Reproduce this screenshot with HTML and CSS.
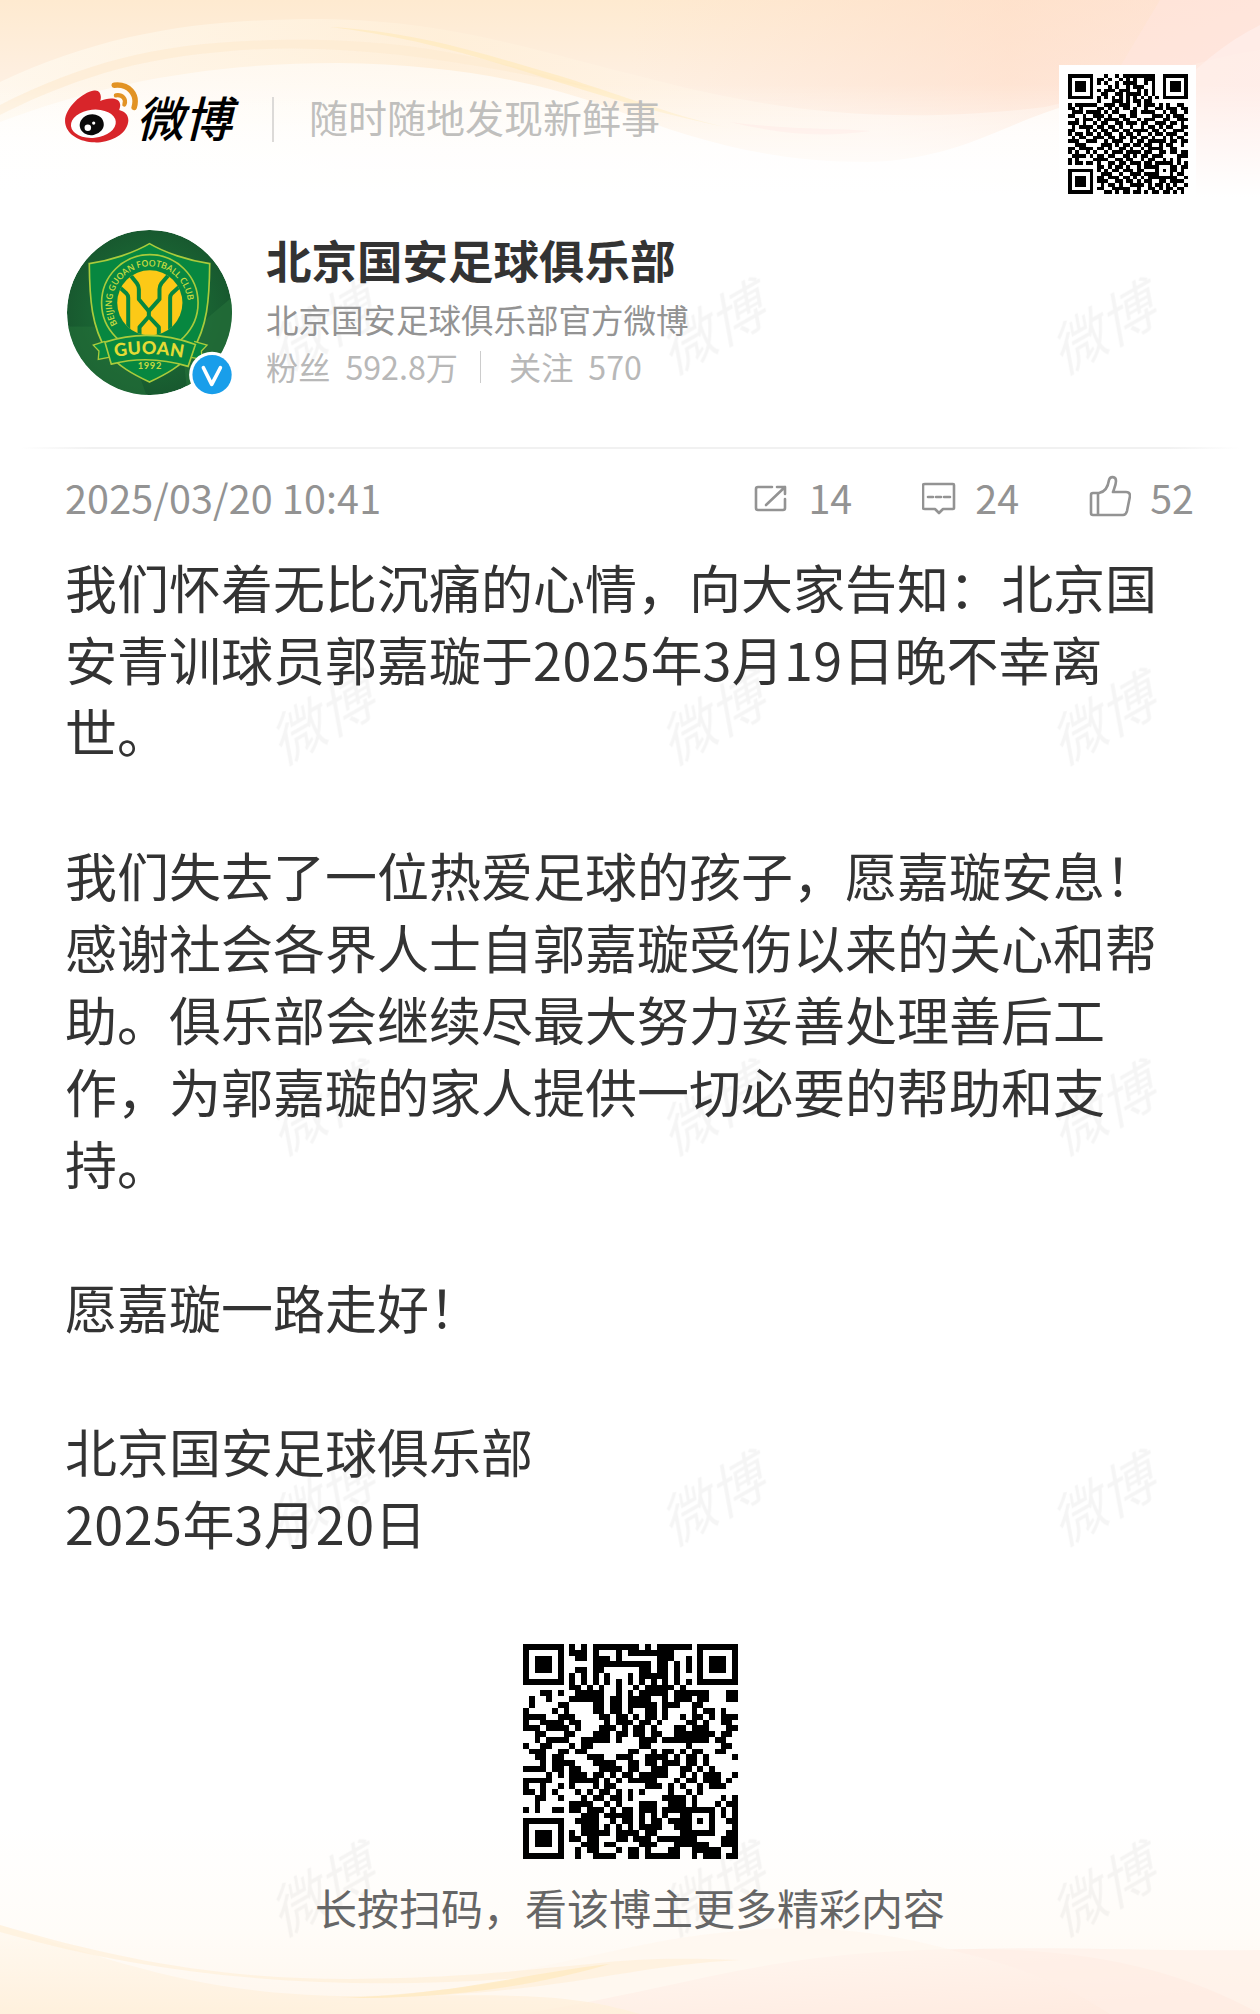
FILE: index.html
```
<!DOCTYPE html>
<html lang="zh-CN">
<head>
    <meta charset="utf-8">
    <title>微博</title>
    <link rel="stylesheet" href="styles.css">
</head>
<body>
    <div class="card">
        <svg class="bg-top" viewBox="0 0 1260 240" preserveAspectRatio="none">
            <defs>
                <linearGradient id="topBase" x1="0" y1="0" x2="0" y2="1">
                    <stop offset="0" stop-color="#feead0"/>
                    <stop offset="0.35" stop-color="#fef0e2"/>
                    <stop offset="0.75" stop-color="#fffaf6"/>
                    <stop offset="1" stop-color="#fff"/>
                </linearGradient>
                <linearGradient id="topPink" x1="0" y1="0" x2="1" y2="0">
                    <stop offset="0.5" stop-color="#ffdfd0" stop-opacity="0"/>
                    <stop offset="0.8" stop-color="#ffdcc9" stop-opacity="0.6"/>
                    <stop offset="1" stop-color="#ffe0da" stop-opacity="0.6"/>
                </linearGradient>
                <linearGradient id="topHill" x1="0" y1="0" x2="0" y2="1">
                    <stop offset="0" stop-color="#fffaf3"/>
                    <stop offset="0.5" stop-color="#fff"/>
                </linearGradient>
                <linearGradient id="topBand" x1="0" y1="0" x2="1" y2="0">
                    <stop offset="0" stop-color="#fffaf0"/>
                    <stop offset="0.35" stop-color="#fff0da"/>
                    <stop offset="0.7" stop-color="#fff6ee"/>
                    <stop offset="1" stop-color="#fff2ea" stop-opacity="0.3"/>
                </linearGradient>
                <linearGradient id="topFade" x1="0" y1="0" x2="0" y2="1">
                    <stop offset="0.35" stop-color="#fff" stop-opacity="0"/>
                    <stop offset="0.82" stop-color="#fff"/>
                </linearGradient>
            </defs>
            <rect width="1260" height="240" fill="url(#topBase)"/>
            <rect width="1260" height="240" fill="url(#topPink)"/>
            <path d="M1160 0 L1115 75 L1060 240 H1260 V0Z" fill="#ffe6df" opacity="0.5"/>
            <path d="M1260 25 C1190 60 1130 130 1080 240 H1260Z" fill="#fff0ee" opacity="0.6"/>
            <path d="M0 82 C110 30 210 19 321 19 C450 20 540 52 643 77 C760 108 880 127 1045 107 C1120 90 1190 60 1260 50 V240 H0Z" fill="url(#topBand)" opacity="0.75"/>
            <path d="M0 105 C100 55 180 38 320 40 C440 42 520 68 600 90 C460 60 340 40 220 52 C120 60 50 90 0 115Z" fill="#feebd2" opacity="0.7"/>
            <path d="M0 122 C110 80 220 63 338 63 C450 64 540 82 610 108 C700 142 770 162 868 162 C960 160 1010 120 1070 105 V240 H0Z" fill="url(#topHill)" opacity="0.85"/>
            <path d="M330 27 C420 32 490 56 560 76 C630 98 680 118 730 128 C650 112 590 92 520 70 C450 48 390 34 330 27Z" fill="#ffe9b8" opacity="0.6"/>
            <path d="M730 122 C790 130 830 128 870 131 C820 138 780 134 730 122Z" fill="#ffe3dc" opacity="0.7"/>
            <rect width="1260" height="240" fill="url(#topFade)"/>
        </svg>

        <svg class="bg-bottom" viewBox="0 0 1260 234" preserveAspectRatio="none">
            <defs>
                <linearGradient id="botBase" x1="0" y1="0" x2="0" y2="1">
                    <stop offset="0.2" stop-color="#fff"/>
                    <stop offset="0.65" stop-color="#fffcf8"/>
                    <stop offset="1" stop-color="#fff6ec"/>
                </linearGradient>
                <linearGradient id="botLeft" x1="0" y1="0" x2="0" y2="1">
                    <stop offset="0" stop-color="#fff9f0"/>
                    <stop offset="1" stop-color="#ffefd9"/>
                </linearGradient>
                <linearGradient id="botRight" x1="0" y1="0" x2="1" y2="1">
                    <stop offset="0" stop-color="#fff8f2"/>
                    <stop offset="1" stop-color="#ffe9de"/>
                </linearGradient>
            </defs>
            <rect width="1260" height="234" fill="url(#botBase)"/>
            <path d="M440 200 C580 190 640 150 800 148 C900 150 1000 175 1100 234 H300Z" fill="#fff7f0" opacity="0.9"/>
            <path d="M520 234 C700 205 760 172 960 169 C1090 168 1180 190 1260 234Z" fill="url(#botRight)"/>
            <path d="M950 170 C1040 190 1080 215 1110 234 H1260 V170 C1150 172 1050 165 950 170Z" fill="#ffeee6" opacity="0.6"/>
            <path d="M0 145 C110 180 200 214 340 216 C500 216 560 210 640 234 H0Z" fill="url(#botLeft)" opacity="0.8"/>
            <path d="M0 145 C120 180 220 199 350 199 C470 198 520 190 590 184 C640 178 680 178 740 180 C620 186 560 216 350 218 C460 210 500 202 520 198 C360 210 180 204 0 152Z" fill="#ffefd6" opacity="0.6"/>
            <path d="M340 218 C460 214 520 194 610 184 C540 204 460 219 340 218Z" fill="#ffe9bd" opacity="0.7"/>
        </svg>

        <!-- watermark grid -->
        <svg class="watermark">
            <defs>
                <pattern id="wm" x="137" y="124" width="390.5" height="390.5" patternUnits="userSpaceOnUse">
                    <text class="wm-text" x="195" y="215" text-anchor="middle" transform="translate(8 0) rotate(-30 195 195) skewX(-6)">微博</text>
                </pattern>
            </defs>
            <rect y="240" width="1260" height="1774" fill="url(#wm)"/>
        </svg>

        <div class="header">
            <svg class="logo-eye" viewBox="0 0 228 190">
                <path d="M0 128 C-8 85 50 32 88 26 C108 23 112 44 107 58 C130 48 165 46 168 68 C169 76 166 82 165 86 C188 92 198 108 191 130 C180 166 132 186 90 185 C45 184 6 162 0 128Z" fill="#d8252a"/>
                <ellipse cx="86" cy="128" rx="69" ry="43" fill="#fff" transform="rotate(-6 86 128)"/>
                <ellipse cx="81" cy="131" rx="37" ry="32" fill="#0a0a0a" transform="rotate(-10 81 131)"/>
                <circle cx="69" cy="140" r="10" fill="#fff"/>
                <circle cx="87" cy="126" r="5" fill="#fff"/>
                <path d="M150 10 C195 5 223 38 211 78" fill="none" stroke="#e29324" stroke-width="17" stroke-linecap="round"/>
                <path d="M155 41 C176 38 188 53 181 69" fill="none" stroke="#e29324" stroke-width="13" stroke-linecap="round"/>
            </svg>
            <span class="logo-text">微博</span>
            <span class="header-line"></span>
            <span class="slogan">随时随地发现新鲜事</span>
            <div class="qr-box"><svg id="qrSmall" class="qr-small"></svg></div>
        </div>

        <div class="user">
            <svg class="avatar" viewBox="30 24 520 520">
                <defs>
                    <radialGradient id="avatarBg">
                        <stop offset="0" stop-color="#1c7a3b"/>
                        <stop offset="1" stop-color="#18592f"/>
                    </radialGradient>
                    <clipPath id="round"><circle cx="284" cy="278" r="248"/></clipPath>
                    <clipPath id="ball"><circle cx="285" cy="249" r="98"/></clipPath>
                    <path id="ringText" d="M188 313 A114 114 0 1 1 382 313"/>
                    <path id="ribbonText" d="M180 412 Q284 392 392 416"/>
                </defs>
                <g clip-path="url(#round)">
                    <circle cx="284" cy="278" r="248" fill="url(#avatarBg)"/>
                    <path d="M540 225 L380 360 L400 540 H540Z" fill="#236f39" opacity="0.7"/>
                    <path d="M30 320 H200 L280 540 H30Z" fill="#237039" opacity="0.6"/>
                </g>
                <path d="M284 71 C330 98 400 122 465 131 C464 240 458 320 412 395 C380 440 330 465 284 487 C238 465 188 440 156 395 C110 320 104 240 103 131 C168 122 238 98 284 71Z" fill="#078740" stroke="#a9cb3c" stroke-width="5"/>
                <circle cx="285" cy="249" r="145" fill="none" stroke="#a9cb3c" stroke-width="5"/>
                <circle cx="285" cy="249" r="98" fill="#fcc917"/>
                <g clip-path="url(#ball)" fill="none" stroke="#078740" stroke-width="12" stroke-linejoin="round">
                    <path d="M222 160 L246 190 Q252 198 252 208 V238 L282 274 L314 238 V208 Q314 198 320 190 L346 160"/>
                    <path d="M190 198 L214 220 Q220 226 220 234 V345 M376 198 L352 220 Q346 226 346 234 V345"/>
                    <path d="M254 352 V322 L282 290 L312 322 V352"/>
                    <path d="M282 270 V294"/>
                </g>
                <text class="crest-ring"><textPath href="#ringText" textLength="410">BEIJING GUOAN FOOTBALL CLUB</textPath></text>
                <path d="M150 365 L115 376 L132 394 L130 419 L165 412 M418 365 L457 376 L440 394 L442 419 L405 412" fill="#078740" stroke="#a9cb3c" stroke-width="4"/>
                <path d="M150 367 Q284 323 422 374 L400 440 Q284 404 169 433Z" fill="#078740" stroke="#a9cb3c" stroke-width="5"/>
                <text class="crest-name"><textPath href="#ribbonText" textLength="206">GUOAN</textPath></text>
                <text class="crest-year" x="285" y="448" text-anchor="middle">1992</text>
                <circle cx="472" cy="465" r="69" fill="#fff"/>
                <circle cx="472" cy="465" r="59" fill="#199eea"/>
                <path d="M446 444 L471 494 L497 444" fill="none" stroke="#fff" stroke-width="11" stroke-linecap="round" stroke-linejoin="round"/>
            </svg>
            <div class="user-info">
                <div class="user-name">北京国安足球俱乐部</div>
                <div class="user-desc">北京国安足球俱乐部官方微博</div>
                <div class="user-stats">
                    <span>粉丝</span><span class="num">592.8万</span>
                    <span class="stats-line"></span>
                    <span>关注</span><span class="num">570</span>
                </div>
            </div>
        </div>

        <div class="divider"></div>

        <div class="meta">
            <span class="date">2025/03/20 10:41</span>
            <span class="action">
                <svg class="icon-share" viewBox="0 0 34 30">
                    <path d="M18 3 H4 Q2 3 2 5 V24 Q2 26 4 26 H29 Q31 26 31 24 V15"/>
                    <path d="M23 3 H31 V10 M31 3 L12 21"/>
                </svg>14
            </span>
            <span class="action">
                <svg class="icon-comment" viewBox="0 0 34 34">
                    <path d="M3 2 H31 Q32 2 32 3 V26 Q32 27 31 27 H21 L17 31 L13 27 H3 Q1 27 1 26 V3 Q1 2 3 2Z"/>
                    <path d="M6 15 H11 M14 15 H19 M22 15 H28"/>
                </svg>24
            </span>
            <span class="action">
                <svg class="icon-like" viewBox="0 0 42 42">
                    <path d="M4 18 H10 C16 17 19 12 20 5 C21 1 27 1 27 6 C27 10 25 14 24 17 H37 Q41 17 41 21 L38 36 Q37 40 34 40 H4 Q2 40 2 38 V20 Q2 18 4 18Z M9 18 V40"/>
                </svg>52
            </span>
        </div>

        <div class="content">
            我们怀着无比沉痛的心情，向大家告知：北京国<br>
            安青训球员郭嘉璇于<span class="digits">2025</span>年<span class="digits">3</span>月<span class="digits">19</span>日晚不幸离<br>
            世。<br>
            <br>
            我们失去了一位热爱足球的孩子，愿嘉璇安息！<br>
            感谢社会各界人士自郭嘉璇受伤以来的关心和帮<br>
            助。俱乐部会继续尽最大努力妥善处理善后工<br>
            作，为郭嘉璇的家人提供一切必要的帮助和支<br>
            持。<br>
            <br>
            愿嘉璇一路走好！<br>
            <br>
            北京国安足球俱乐部<br>
            <span class="digits">2025</span>年<span class="digits">3</span>月<span class="digits">20</span>日
        </div>

        <div class="footer">
            <svg id="qrBig" class="qr-big"></svg>
            <div class="footer-text">长按扫码，看该博主更多精彩内容</div>
        </div>
    </div>

    <script src="qr.js"></script>
</body>
</html>
```

FILE: styles.css
```
body {
    margin: 0;
    background: #fff;
    font-family: "Noto Sans CJK SC", sans-serif;
    color: #333;
}
.card {
    position: relative;
    width: 1260px;
    height: 2014px;
    overflow: hidden;
    display: flex;
    flex-direction: column;
}

/* background layers */
.bg-top,
.bg-bottom,
.watermark {
    position: absolute;
    left: 0;
    width: 1260px;
    z-index: -1;
}
.bg-top {
    top: 0;
    height: 240px;
}
.bg-bottom {
    bottom: 0;
    height: 234px;
}
.watermark {
    top: 0;
    height: 2014px;
}
.wm-text {
    font-size: 56px;
    font-style: italic;
    fill: #000;
    fill-opacity: 0.04;
}

.header {
    display: flex;
    align-items: center;
    height: 136px;
    margin-top: 65px;
    padding: 0 64px 0 65px;
}
.logo-eye {
    width: 75px;
    height: 62px;
    margin-top: -40px;
}
.logo-text {
    width: 107px;
    margin: -34px 0 0 -4px;
    font-size: 48px;
    line-height: 60px;
    font-weight: 500;
    font-style: italic;
    color: #000;
    white-space: nowrap;
}
.header-line {
    width: 2px;
    height: 45px;
    margin: -28px 35px 0 29px;
    background: #dcdad8;
}
.slogan {
    margin-top: -34px;
    font-size: 39px;
    line-height: 60px;
    color: #c0bfbd;
}
.qr-box {
    margin-left: auto;
    padding: 9px 8px 7px 9px;
    background: #fff;
}
.qr-small {
    display: block;
    width: 120px;
    height: 120px;
}

.user {
    display: flex;
    height: 173px;
    margin-top: 27px;
    padding-left: 65px;
}
.avatar {
    width: 173px;
    height: 173px;
}
.crest-ring {
    font-family: "Open Sans", sans-serif;
    font-weight: 600;
    font-size: 27px;
    fill: #c5d940;
}
.crest-name {
    font-family: Lato, sans-serif;
    font-weight: 900;
    font-size: 54px;
    fill: #e3db35;
}
.crest-year {
    font-family: Lato, sans-serif;
    font-weight: 700;
    font-size: 28px;
    letter-spacing: 2px;
    fill: #c5d940;
}
.user-info {
    margin-left: 28px;
}
.user-name {
    font-size: 45.5px;
    line-height: 63px;
    font-weight: 700;
}
.user-desc {
    font-size: 32.5px;
    line-height: 55px;
    color: #939393;
}
.user-stats {
    display: flex;
    align-items: center;
    font-size: 32.2px;
    line-height: 41px;
    color: #b8b8b8;
}
.num {
    margin-left: 15px;
}
.stats-line {
    width: 1px;
    height: 32px;
    margin: 0 28px 0 22px;
    background: #ccc;
}

.divider {
    height: 2px;
    margin: 46px 20px 0;
    background: linear-gradient(to right, #fff, #f1f1f1 6%, #f1f1f1 94%, #fff);
}

.meta {
    display: flex;
    align-items: center;
    height: 60px;
    margin-top: 18px;
    padding: 0 66px 0 65px;
    font-size: 39.5px;
    line-height: 60px;
    color: #939393;
}
.date {
    margin-right: auto;
    letter-spacing: 0.15px;
}
.action {
    display: flex;
    align-items: center;
    margin-left: 70px;
}
.action svg {
    position: relative;
    top: 2px;
    fill: none;
    stroke: #939393;
    stroke-width: 2.6;
    stroke-linejoin: round;
    stroke-linecap: round;
}
.icon-share {
    width: 34px;
    height: 30px;
    margin-right: 20px;
}
.icon-comment {
    width: 34px;
    height: 34px;
    margin-right: 19px;
}
.icon-like {
    width: 42px;
    height: 42px;
    margin: -6px 19px 0 0;
}

.content {
    margin: 24px 0 0 65px;
    font-size: 52px;
    line-height: 72px;
    white-space: nowrap;
}
.digits {
    letter-spacing: 0.5px;
}

.footer {
    display: flex;
    flex-direction: column;
    align-items: center;
    margin-top: 85px;
}
.qr-big {
    width: 215px;
    height: 215px;
}
.footer-text {
    margin-top: 18px;
    font-size: 42px;
    line-height: 60px;
    color: #666;
}
```

FILE: qr.js
```
const bigRows = [
    '1111111010101111111101011111101111111',
    '1000001011101000101111111100001000001',
    '1011101001101110100000011100101011101',
    '1011101000001111111111011010101011101',
    '1011101001101100000011011010101011101',
    '1000001010101010001011111010001000001',
    '1111111010101010101010101010101111111',
    '0000000011010100100101111101000000000',
    '0001101001111100101011111011111100011',
    '0100100011111101101111001011101100011',
    '0100001100001101101111101110011000000',
    '1000010100001101101001101000010110100',
    '1111001110000110110101101001011010111',
    '1001111011000010111011010000110100110',
    '1110111101000111010110100011011100011',
    '0011000110001110110110110011111110110',
    '0010111100111110100011101111111101100',
    '1001100010110000000011000000100000110',
    '0111001101100000001100101101011001100',
    '0011011000011100111001111010110100001',
    '0001011110001111001101101110110100000',
    '1111011011000111101100111001101010000',
    '0000101011101101011011111001010111001',
    '1111100011111010101111100010110111010',
    '1001001010001011000001110101001011100',
    '1101010001010110101010000100101000000',
    '0011001000101101101000001111010000101',
    '0010000011110010100011100111010001011',
    '1010011011011101011011101111111110101',
    '0000000000111011111010101001100010101',
    '1111111001111001011010110111101010011',
    '1000001000111010101011110011100010001',
    '1011101010111110111101100001111110011',
    '1011101011011000110111011111110000111',
    '1011101000111011000011100011111100111',
    '1000001001011000101101000110011111001',
    '1111111001001111001101111110010111011'
];

const smallRows = [
    '111111100010010111111111001111111',
    '100000101101001010100111001000001',
    '101110101010010111100101001011101',
    '101110100001010010111001001011101',
    '101110101011101110010101001011101',
    '100000100110011011110101001000001',
    '111111101010101010101010101111111',
    '000000001000111010110110000000000',
    '101111110011101110010111010100110',
    '110100001101010110100100110111011',
    '011101111010110001101111001011001',
    '110010011101001101100001110101110',
    '001011101011110110010111001100111',
    '111010010110011011101100111011010',
    '010111101101101001001011010110011',
    '110001010110110110111101101001110',
    '101101101011001011010010110111001',
    '010110011101101101101101001010110',
    '111001110010111001011011111011011',
    '001110000111010110110110010110010',
    '110111101101001101001011110011000',
    '101001010010111011110110011011011',
    '011110101101100110101101110000111',
    '101000011110011011001011001010100',
    '101101101001101101110110111110101',
    '000000001101011010010111100011011',
    '111111101010110111011000101011010',
    '100000100111001001110111100010110',
    '101110101101110110101011111111001',
    '101110101110011011010110011011110',
    '101110100101101001111010110101001',
    '100000101100111110010011010110110',
    '111111100011010110110101101101010'
];

// one unit square per dark module
function drawQr(id, rows) {
    const svg = document.getElementById(id);
    let d = '';
    rows.forEach((row, y) => {
        for (let x = 0; x < row.length; x++) {
            if (row[x] === '1') {
                d += `M${x} ${y}h1v1h-1z`;
            }
        }
    });
    svg.setAttribute('viewBox', `0 0 ${rows.length} ${rows.length}`);
    svg.setAttribute('shape-rendering', 'crispEdges');
    svg.innerHTML = `<path d="${d}"/>`;
}

drawQr('qrBig', bigRows);
drawQr('qrSmall', smallRows);
```
